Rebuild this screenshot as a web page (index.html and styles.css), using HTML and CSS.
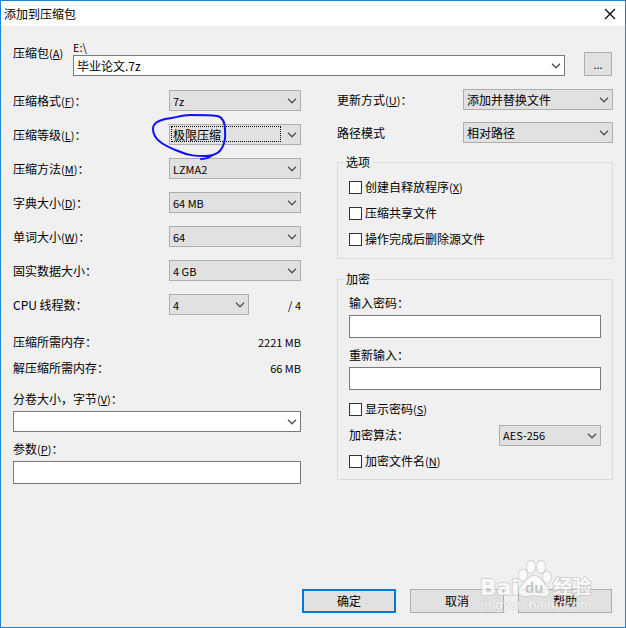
FILE: index.html
```html
<!DOCTYPE html>
<html lang="zh-CN">
<head>
<meta charset="utf-8">
<meta name="viewport" content="width=device-width, initial-scale=1">
<title>添加到压缩包</title>
<link rel="stylesheet" href="styles.css">
</head>
<body>
<svg class="sprite" aria-hidden="true">
  <symbol id="chevron" viewBox="0 0 10 6"><path d="M1 .8l4 4 4-4" fill="none" stroke="#505050" stroke-width="1.3"/></symbol>
</svg>
<form class="dialog">
  <header class="titlebar">
    <h1 class="title">添加到压缩包</h1>
    <button class="close" type="button" aria-label="关闭">
      <svg viewBox="0 0 12 12" width="12" height="12"><path d="M1 1l10 10M11 1L1 11" fill="none" stroke="#000" stroke-width="1.2"/></svg>
    </button>
  </header>

  <main class="content">
    <div class="archive">
      <label class="archive-label" for="archive">压缩包<span class="key">(<u>A</u>)</span></label>
      <div class="archive-field">
        <div class="key">E:\</div>
        <div class="combo editable">
          <input class="text" id="archive" type="text" value="毕业论文.7z">
          <svg class="arrow"><use href="#chevron"/></svg>
        </div>
      </div>
      <button class="button browse" type="button">...</button>
    </div>

    <div class="columns">
      <section class="left">
        <div class="rows">
          <div class="row">
            <label for="format">压缩格式<span class="key">(<u>F</u>)</span>：</label>
            <div class="combo"><select class="latin" id="format"><option>7z</option></select><svg class="arrow"><use href="#chevron"/></svg></div>
          </div>
          <div class="row">
            <label for="level">压缩等级<span class="key">(<u>L</u>)</span>：</label>
            <div class="combo focused"><select id="level"><option>极限压缩</option></select><svg class="arrow"><use href="#chevron"/></svg>
              <svg class="pen" viewBox="0 0 78 50" width="78" height="50" aria-hidden="true"><path d="M74 18C74 9 71 5 66 4C59 3 48 3 39 3C31 3 24 6 14 7C7 9 2 11 2 17C2 28 14 34 27 39C38 44 46 44 54 44C66 44 71 39 73 31C75 26 74 22 74 18M50 47C55 47 59 45 62 43" fill="none" stroke="#1010f0" stroke-width="2" stroke-linecap="round"/></svg>
            </div>
          </div>
          <div class="row">
            <label for="method">压缩方法<span class="key">(<u>M</u>)</span>：</label>
            <div class="combo"><select class="latin" id="method"><option>LZMA2</option></select><svg class="arrow"><use href="#chevron"/></svg></div>
          </div>
          <div class="row">
            <label for="dictionary">字典大小<span class="key">(<u>D</u>)</span>：</label>
            <div class="combo"><select class="latin" id="dictionary"><option>64 MB</option></select><svg class="arrow"><use href="#chevron"/></svg></div>
          </div>
          <div class="row">
            <label for="word">单词大小<span class="key">(<u>W</u>)</span>：</label>
            <div class="combo"><select class="latin" id="word"><option>64</option></select><svg class="arrow"><use href="#chevron"/></svg></div>
          </div>
          <div class="row">
            <label for="solid">固实数据大小：</label>
            <div class="combo"><select class="latin" id="solid"><option>4 GB</option></select><svg class="arrow"><use href="#chevron"/></svg></div>
          </div>
          <div class="row">
            <label for="threads">CPU 线程数：</label>
            <div class="threads">
              <div class="combo"><select class="latin" id="threads"><option>4</option></select><svg class="arrow"><use href="#chevron"/></svg></div>
              <span class="key">/ 4</span>
            </div>
          </div>
        </div>
        <div class="memory">
          <div class="pair"><span>压缩所需内存：</span><span class="key">2221 MB</span></div>
          <div class="pair"><span>解压缩所需内存：</span><span class="key">66 MB</span></div>
        </div>
        <div class="field">
          <label for="volume">分卷大小，字节<span class="key">(<u>V</u>)</span>：</label>
          <div class="combo editable"><input class="text" id="volume" type="text"><svg class="arrow"><use href="#chevron"/></svg></div>
        </div>
        <div class="field">
          <label for="params">参数<span class="key">(<u>P</u>)</span>：</label>
          <input class="text box" id="params" type="text">
        </div>
      </section>

      <section class="right">
        <div class="modes">
          <div class="row">
            <label for="update">更新方式<span class="key">(<u>U</u>)</span>：</label>
            <div class="combo"><select id="update"><option>添加并替换文件</option></select><svg class="arrow"><use href="#chevron"/></svg></div>
          </div>
          <div class="row">
            <label for="path">路径模式</label>
            <div class="combo"><select id="path"><option>相对路径</option></select><svg class="arrow"><use href="#chevron"/></svg></div>
          </div>
        </div>
        <fieldset class="group options">
          <legend>选项</legend>
          <label class="check"><input type="checkbox"><span>创建自释放程序<span class="key">(<u>X</u>)</span></span></label>
          <label class="check"><input type="checkbox"><span>压缩共享文件</span></label>
          <label class="check"><input type="checkbox"><span>操作完成后删除源文件</span></label>
        </fieldset>
        <fieldset class="group encryption">
          <legend>加密</legend>
          <div class="field">
            <label for="password">输入密码：</label>
            <input class="text box" id="password" type="password">
          </div>
          <div class="field">
            <label for="repeat">重新输入：</label>
            <input class="text box" id="repeat" type="password">
          </div>
          <div class="settings">
            <label class="check"><input type="checkbox"><span>显示密码<span class="key">(<u>S</u>)</span></span></label>
            <div class="row algorithm">
              <label for="algorithm">加密算法：</label>
              <div class="combo"><select class="latin" id="algorithm"><option>AES-256</option></select><svg class="arrow"><use href="#chevron"/></svg></div>
            </div>
            <label class="check"><input type="checkbox"><span>加密文件名<span class="key">(<u>N</u>)</span></span></label>
          </div>
        </fieldset>
      </section>
    </div>
  </main>

  <footer class="actions">
    <button class="button primary" type="submit">确定</button>
    <button class="button" type="button">取消</button>
    <button class="button" type="button">帮助</button>
    <svg class="watermark" viewBox="0 0 116 56" width="116" height="56" aria-hidden="true">
      <g class="mark">
        <text class="mark-name" x="0" y="36">Bai</text>
        <ellipse cx="43" cy="16" rx="4" ry="5.5"/>
        <ellipse cx="51" cy="8" rx="4" ry="6"/>
        <ellipse cx="61" cy="8" rx="4" ry="6"/>
        <ellipse cx="67" cy="18" rx="4" ry="5.5"/>
        <path d="M54 17C61 17 62 24 67 28C72 34 68 38 62 37C57 36 51 36 47 37C40 38 36 33 41 28C46 24 47 17 54 17Z"/>
        <text class="mark-cjk" x="73" y="35">经验</text>
        <text class="mark-url" x="1" y="50">jingyan.baidu.com</text>
      </g>
      <text class="mark-du" x="45" y="34">du</text>
    </svg>
  </footer>
</form>
</body>
</html>
```
FILE: styles.css
```css
* {
  box-sizing: border-box;
}

body {
  margin: 0;
  color: #000;
  font: 12px/16px "Noto Sans CJK SC", sans-serif;
}

input,
select,
button {
  margin: 0;
  color: inherit;
  font: inherit;
}

svg {
  display: block;
}

.sprite {
  display: none;
}

.key,
.latin {
  font-size: 11px;
}

.dialog {
  display: flex;
  flex-direction: column;
  min-height: 100vh;
  border: 1px solid #1883d7;
  background: #f0f0f0;
}

.titlebar {
  display: flex;
  align-items: center;
  justify-content: space-between;
  height: 25px;
  padding: 0 9px 0 3px;
  background: #fff;
}

.title {
  margin: 0;
  font-size: 12px;
  font-weight: 400;
}

.close {
  padding: 0;
  border: 0;
  background: none;
}

.content {
  padding: 13px 12px 0;
}

.archive {
  display: flex;
  align-items: flex-end;
  padding-right: 1px;
}

.archive-label {
  width: 60px;
  margin-bottom: 15px;
}

.archive-field {
  flex: 1;
}

.browse {
  width: 28px;
  margin-left: 19px;
  font-size: 11px;
}

.columns {
  display: grid;
  grid-template-columns: 288fr 276fr;
  gap: 36px;
  margin-top: 13px;
}

.left {
  padding-top: 1px;
}

.rows {
  display: grid;
  gap: 13px;
}

.row {
  display: grid;
  grid-template-columns: 156fr 132fr;
  align-items: center;
}

.combo {
  position: relative;
  display: flex;
  height: 21px;
}

.combo select {
  width: 100%;
  padding: 0 20px 0 3px;
  border: 1px solid #adadad;
  border-radius: 0;
  background: #e1e1e1;
  appearance: none;
}

.arrow {
  position: absolute;
  top: 8px;
  right: 4px;
  width: 10px;
  height: 6px;
  pointer-events: none;
}

.focused::after {
  content: "";
  position: absolute;
  inset: 2px 20px 3px 2px;
  border: 1px dotted #000;
  pointer-events: none;
}

.pen {
  position: absolute;
  top: -12px;
  left: -18px;
  z-index: 1;
  pointer-events: none;
}

.threads {
  display: flex;
  align-items: center;
  justify-content: space-between;
}

.threads .combo {
  width: 80px;
}

.text {
  width: 100%;
  padding: 0 3px;
  border: 1px solid #7a7a7a;
  border-radius: 0;
  background: #fff;
}

.box {
  display: block;
  height: 23px;
}

.memory {
  display: grid;
  gap: 10px;
  margin: 19px 0 15px;
}

.pair {
  display: flex;
  justify-content: space-between;
}

.field {
  display: grid;
  gap: 4px;
  margin-bottom: 9px;
}

.modes {
  display: grid;
  gap: 12px;
  margin-bottom: 11px;
}

.modes .row {
  grid-template-columns: 126fr 150fr;
}

.group {
  min-width: 0;
  margin: 0;
  padding: 4px 11px 6px;
  border: 1px solid #dcdcdc;
}

.group legend {
  margin-left: -5px;
  padding: 0 2px;
}

.encryption {
  margin-top: 12px;
  padding-top: 8px;
  padding-bottom: 5px;
}

.settings {
  margin-top: -3px;
}

.check {
  display: flex;
  align-items: center;
  gap: 3px;
  height: 26px;
}

.check input {
  width: 13px;
  height: 13px;
  border: 1px solid #333;
  background: #fff;
  appearance: none;
}

.check input:checked {
  background: #0078d7;
}

.algorithm {
  grid-template-columns: 150fr 102fr;
  height: 26px;
}

.button {
  height: 24px;
  padding: 0;
  border: 1px solid #adadad;
  background: #e1e1e1;
}

.actions {
  position: relative;
  display: flex;
  justify-content: flex-end;
  gap: 14px;
  margin-top: auto;
  padding: 12px 13px 14px;
}

.actions .button {
  width: 94px;
}

.actions .primary {
  border: 2px solid #0078d7;
}

.watermark {
  position: absolute;
  right: 29px;
  bottom: 12px;
  pointer-events: none;
}

.mark {
  fill: #fff;
  stroke: #c8c8c8;
  stroke-width: 2px;
  paint-order: stroke;
  opacity: 0.7;
}

.mark-name {
  font: 700 22px "DejaVu Sans", sans-serif;
}

.mark-cjk {
  font: 700 19px "Noto Sans CJK SC", sans-serif;
}

.mark-url {
  font: 12px "DejaVu Sans", sans-serif;
  stroke-width: 1px;
}

.mark-du {
  fill: #c4c4c4;
  font: 700 15px "Liberation Sans", sans-serif;
}
```
